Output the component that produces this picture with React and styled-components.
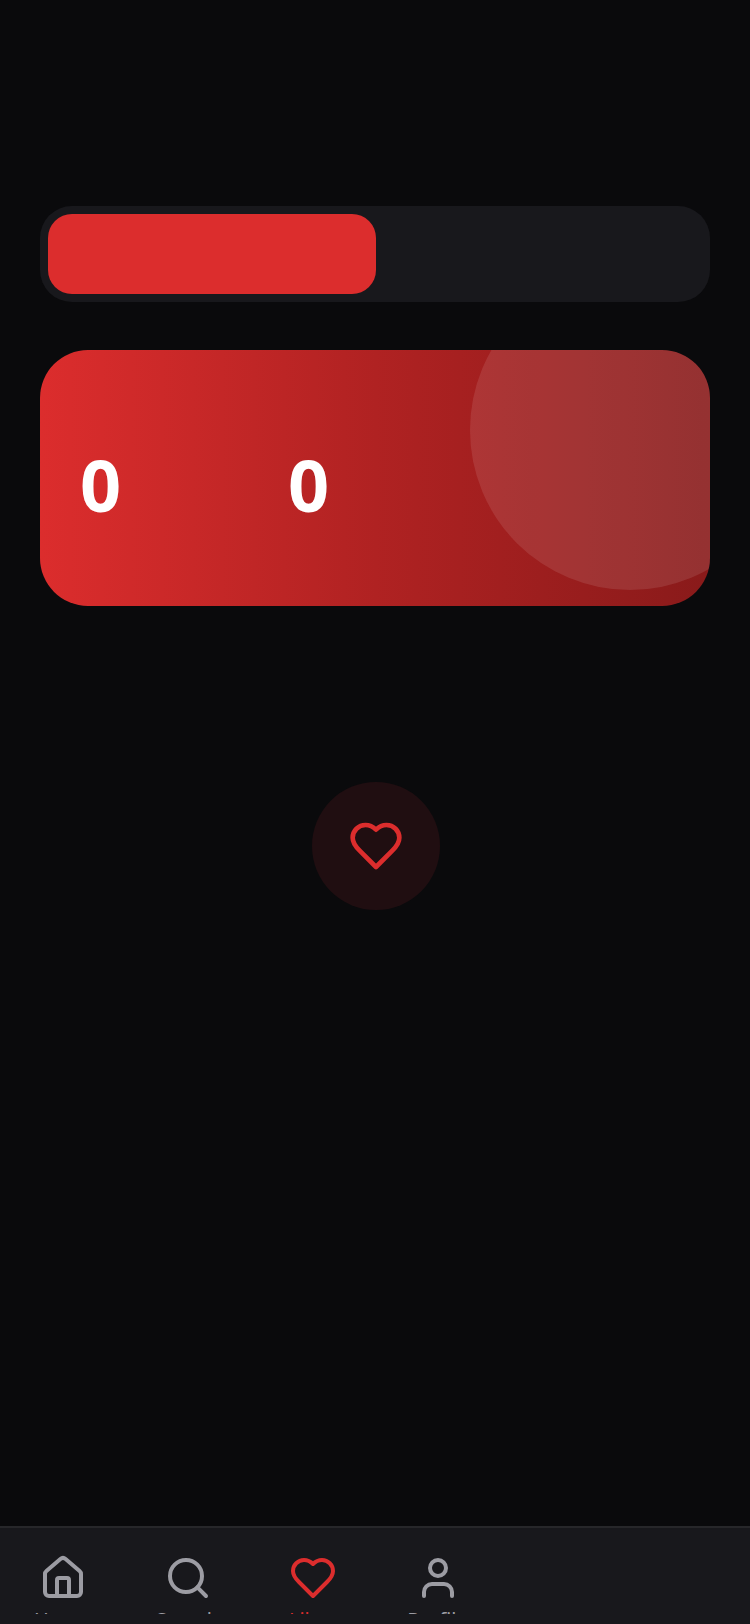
import React from 'react'
import styled, {createGlobalStyle} from 'styled-components'

const GlobalStyle = createGlobalStyle`
    * {
        box-sizing: border-box;
    }
    body {
        margin: 0;
        background: #0a0a0c;
        color: #fff;
        font-family: "Noto Sans", sans-serif;
    }
    button {
        border: 0;
        padding: 0;
        font: inherit;
    }
`

const Screen = styled.div`
    min-height: 100vh;
    display: flex;
    flex-direction: column;
`

const Content = styled.main`
    flex: 1;
    display: flex;
    flex-direction: column;
    gap: 48px;
    padding: 206px 40px 0;
`

const Segments = styled.div`
    display: flex;
    padding: 8px 6px 8px 8px;
    border-radius: 32px;
    background: #18181c;
`

const Segment = styled.button`
    flex: 1;
    height: 80px;
    border-radius: 24px;
    background: ${({$active}) => ($active ? '#dc2d2d' : 'transparent')};
    cursor: pointer;
`

const StatsCard = styled.section`
    position: relative;
    display: flex;
    align-items: center;
    height: 256px;
    padding: 12px 40px 0;
    border-radius: 48px;
    overflow: hidden;
    background: linear-gradient(90deg, #dc2d2d 0%, #b02222 50%, #891a1a 100%);
`

const Bubble = styled.span`
    position: absolute;
    top: -80px;
    right: -80px;
    width: 320px;
    height: 320px;
    border-radius: 50%;
    background: rgba(255, 255, 255, 0.1);
`

const Stat = styled.strong`
    width: 208px;
    font-size: 72px;
    font-weight: 700;
    line-height: 80px;
`

const EmptyState = styled.div`
    display: flex;
    justify-content: center;
    padding: 128px 0 0 2px;
`

const HeartCircle = styled.div`
    display: flex;
    align-items: center;
    justify-content: center;
    width: 128px;
    height: 128px;
    border-radius: 50%;
    background: #200e11;
    color: #dc2d2d;
`

const TabBar = styled.nav`
    display: grid;
    grid-template-columns: repeat(6, 1fr);
    height: 98px;
    padding-top: 26px;
    border-top: 2px solid #27272a;
    background: #18181c;
`

const Tab = styled.a`
    display: flex;
    flex-direction: column;
    align-items: center;
    color: ${({$active}) => ($active ? '#dc2d2d' : '#9c9ca3')};
    text-decoration: none;
`

const IconSlot = styled.span`
    display: flex;
    height: 48px;
`

/* only the top edge of the label shows under the icon */
const TabLabel = styled.span`
    height: 12px;
    overflow: hidden;
    font-size: 20px;
    line-height: 36px;
`

const Icon = ({name, size = 48}) => (
    <svg width={size} height={size} viewBox="0 0 24 24" fill="none" stroke="currentColor" strokeWidth="2" strokeLinecap="round" strokeLinejoin="round" aria-hidden="true">
        {shapes[name]}
    </svg>
)

const shapes = {
    home: (
        <>
            <path d="M15 21v-8a1 1 0 0 0-1-1h-4a1 1 0 0 0-1 1v8" />
            <path d="M3 10a2 2 0 0 1 .709-1.528l7-5.999a2 2 0 0 1 2.582 0l7 5.999A2 2 0 0 1 21 10v9a2 2 0 0 1-2 2H5a2 2 0 0 1-2-2z" />
        </>
    ),
    search: (
        <>
            <circle cx="11" cy="11" r="8" />
            <path d="m21 21-4.3-4.3" />
        </>
    ),
    heart: <path d="M19 14c1.49-1.46 3-3.21 3-5.5A5.5 5.5 0 0 0 16.5 3c-1.76 0-3 .5-4.5 2-1.5-1.5-2.74-2-4.5-2A5.5 5.5 0 0 0 2 8.5c0 2.3 1.5 4.05 3 5.5l7 7Z" />,
    user: (
        <>
            <path d="M19 21v-2a4 4 0 0 0-4-4H9a4 4 0 0 0-4 4v2" />
            <circle cx="12" cy="7" r="4" />
        </>
    ),
}

const tabs = [
    {label: 'Home', icon: 'home'},
    {label: 'Search', icon: 'search'},
    {label: 'Likes', icon: 'heart', active: true},
    {label: 'Profile', icon: 'user'},
]

const App = () => {
    return (
        <>
            <GlobalStyle />
            <Screen>
                <Content>
                    <Segments>
                        <Segment $active aria-label="Likes" aria-pressed="true" />
                        <Segment aria-label="Matches" aria-pressed="false" />
                    </Segments>
                    <StatsCard>
                        <Bubble />
                        <Stat>0</Stat>
                        <Stat>0</Stat>
                    </StatsCard>
                    <EmptyState>
                        <HeartCircle>
                            <Icon name="heart" size={56} />
                        </HeartCircle>
                    </EmptyState>
                </Content>
                <TabBar>
                    {tabs.map(({label, icon, active}) => (
                        <Tab key={label} href={`#${label.toLowerCase()}`} $active={active}>
                            <IconSlot>
                                <Icon name={icon} />
                            </IconSlot>
                            <TabLabel>{label}</TabLabel>
                        </Tab>
                    ))}
                </TabBar>
            </Screen>
        </>
    )
}

export default App
